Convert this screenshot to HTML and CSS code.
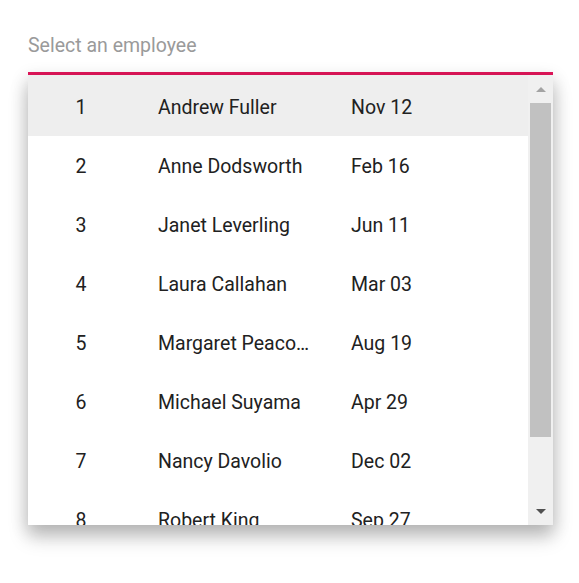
FILE: index.html
```html
<!DOCTYPE html>
<html>
<head>
<meta charset="utf-8">
<link rel="stylesheet" href="styles.css">
</head>
<body>
<div class="combo">
  <div class="input">Select an employee</div>
  <div class="popup">
    <div class="list">
      <div class="row active"><span class="id">1</span><span class="name">Andrew Fuller</span><span class="date">Nov 12</span></div>
      <div class="row"><span class="id">2</span><span class="name">Anne Dodsworth</span><span class="date">Feb 16</span></div>
      <div class="row"><span class="id">3</span><span class="name">Janet Leverling</span><span class="date">Jun 11</span></div>
      <div class="row"><span class="id">4</span><span class="name">Laura Callahan</span><span class="date">Mar 03</span></div>
      <div class="row"><span class="id">5</span><span class="name">Margaret Peacock</span><span class="date">Aug 19</span></div>
      <div class="row"><span class="id">6</span><span class="name">Michael Suyama</span><span class="date">Apr 29</span></div>
      <div class="row"><span class="id">7</span><span class="name">Nancy Davolio</span><span class="date">Dec 02</span></div>
      <div class="row"><span class="id">8</span><span class="name">Robert King</span><span class="date">Sep 27</span></div>
    </div>
    <div class="scrollbar">
      <div class="arrow up"></div>
      <div class="thumb"></div>
      <div class="track"></div>
      <div class="arrow down"></div>
    </div>
  </div>
</div>
</body>
</html>
```
FILE: styles.css
```css
html, body {
  margin: 0;
  padding: 0;
  background: #ffffff;
  height: 583px;
}
body {
  font-family: Roboto, "Liberation Sans", sans-serif;
}
.combo {
  width: 525px;
  margin-left: 28px;
}
.input {
  box-sizing: border-box;
  padding-top: 34px;
  font-size: 19.5px;
  line-height: 24px;
  color: #9a9a9a;
  border-bottom: 3px solid #e3165b;
  height: 75px;
}
.popup {
  display: flex;
  height: 450px;
  background: #fff;
  box-shadow: 0 12px 18px rgba(0,0,0,.22), 0 4px 16px 2px rgba(0,0,0,.12);
  overflow: hidden;
}
.list {
  flex: 1;
  overflow: hidden;
}
.row {
  display: grid;
  grid-template-columns: 106px 193px 1fr;
  height: 59px;
  align-items: center;
  font-size: 19.5px;
  color: #212121;
  padding-top: 2px;
  box-sizing: border-box;
}
.row.active {
  background: #eeeeee;
  height: 61px;
  padding-top: 4px;
}
.id {
  text-align: center;
}
.name {
  padding-left: 24px;
  padding-right: 16px;
  white-space: nowrap;
  overflow: hidden;
  text-overflow: ellipsis;
}
.date {
  padding-left: 24px;
}
.scrollbar {
  width: 25px;
  background: #f0f0f0;
  display: flex;
  flex-direction: column;
  align-items: center;
}
.arrow {
  height: 28px;
  width: 100%;
  display: flex;
  justify-content: center;
  align-items: center;
}
.arrow.up::before {
  content: "";
  border-left: 5px solid transparent;
  border-right: 5px solid transparent;
  border-bottom: 5px solid #a3a3a3;
}
.arrow.down::before {
  content: "";
  border-left: 5px solid transparent;
  border-right: 5px solid transparent;
  border-top: 5px solid #505050;
}
.thumb {
  width: 21px;
  height: 334px;
  background: #c1c1c1;
}
.track {
  flex: 1;
}
```
